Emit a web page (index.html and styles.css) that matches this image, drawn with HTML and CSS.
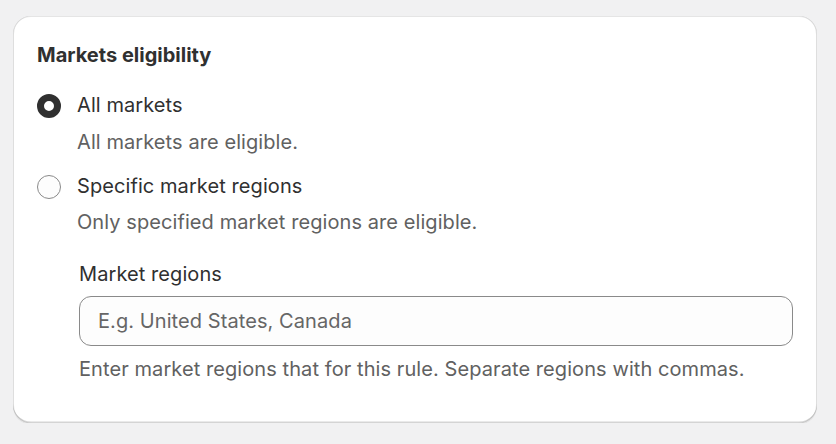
FILE: index.html
```html
<!DOCTYPE html>
<html lang="en">
<head>
<meta charset="utf-8">
<title>Markets eligibility</title>
<link rel="stylesheet" href="styles.css">
</head>
<body>
<div class="page">
  <section class="card">
    <h2 class="card-title">Markets eligibility</h2>
    <div class="choices">
      <div class="choice">
        <div class="choice-row">
          <span class="radio radio-checked"></span>
          <span class="choice-label">All markets</span>
        </div>
        <div class="choice-help">All markets are eligible.</div>
      </div>
      <div class="choice choice-second">
        <div class="choice-row">
          <span class="radio"></span>
          <span class="choice-label">Specific market regions</span>
        </div>
        <div class="choice-help">Only specified market regions are eligible.</div>
        <div class="field">
          <label class="field-label" for="regions">Market regions</label>
          <div class="input">
            <input id="regions" type="text" placeholder="E.g. United States, Canada">
          </div>
          <div class="field-help">Enter market regions that for this rule. Separate regions with commas.</div>
        </div>
      </div>
    </div>
  </section>
</div>
</body>
</html>
```

FILE: styles.css
```css
* { box-sizing: border-box; }
html, body { margin: 0; padding: 0; }
body {
  background: #f1f1f2;
  font-family: Inter, "Noto Sans", sans-serif;
  color: #303030;
  font-size: 20px;
  letter-spacing: 0.08px;
  line-height: 30px;
}
.page {
  padding: 16px 19px 0 13px;
}
.card {
  background: #ffffff;
  border-radius: 18px;
  padding: 24px 24px 39px 24px;
  box-shadow:
    0 1.5px 0 0 rgba(26, 26, 26, 0.07),
    inset 0 1px 0 0 rgba(204, 204, 204, 0.5),
    inset 0 -1.5px 0 0 rgba(0, 0, 0, 0.17),
    inset -1px 0 0 0 rgba(0, 0, 0, 0.13),
    inset 1px 0 0 0 rgba(0, 0, 0, 0.13);
}
.card-title {
  margin: 0;
  font-size: 20px;
  font-weight: 650;
  letter-spacing: 0;
  line-height: 30px;
  color: #303030;
}
.choices {
  margin-top: 20px;
  display: flex;
  flex-direction: column;
  gap: 14px;
}
.choice-row {
  display: flex;
  align-items: center;
  gap: 16px;
}
.radio {
  width: 24px;
  height: 24px;
  border-radius: 50%;
  border: 1px solid #8a8a8a;
  background: #fdfdfd;
  flex: none;
  margin-top: 1px;
}
.radio-checked {
  border: 7px solid #303030;
  background: #ffffff;
}
.choice-label {
  color: #303030;
}
.choice-help {
  margin-top: 7px;
  padding-left: 40px;
  color: #616161;
}
.choice-second .choice-help {
  margin-top: 6px;
}
.field {
  margin-top: 22px;
  padding-left: 42px;
}
.field-label {
  display: block;
  color: #303030;
}
.input {
  margin-top: 7px;
  height: 50px;
  border: 1px solid #8a8a8a;
  border-radius: 12px;
  background: #fdfdfd;
  display: flex;
  align-items: center;
  padding: 0 18px;
}
.input input {
  border: 0;
  outline: 0;
  background: transparent;
  width: 100%;
  font-family: inherit;
  font-size: 20px;
  letter-spacing: 0.08px;
  line-height: 30px;
  color: #303030;
  padding: 0;
}
.input input::placeholder {
  color: #666666;
  opacity: 1;
}
.field-help {
  margin-top: 8px;
  color: #616161;
}
```
